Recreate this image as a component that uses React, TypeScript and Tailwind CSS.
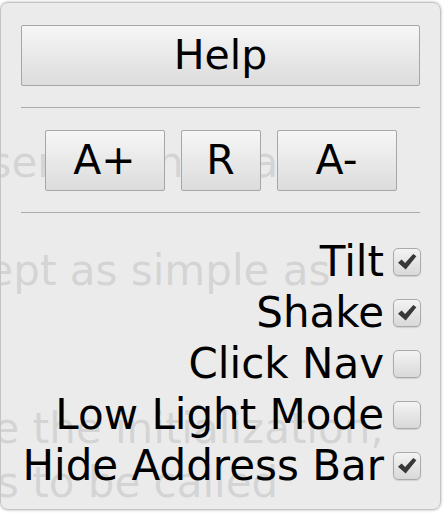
const rows = [
  { label: 'Tilt', checked: true },
  { label: 'Shake', checked: true },
  { label: 'Click Nav', checked: false },
  { label: 'Low Light Mode', checked: false },
  { label: 'Hide Address Bar', checked: true },
];

const btn =
  'h-[61px] rounded-[2px] border border-[#a6a6a6] bg-linear-to-b from-[#f6f6f6] to-[#dcdcdc] text-[41px] leading-none text-black';

function Check({ checked }: { checked: boolean }) {
  return (
    <span className="flex h-[28px] w-[28px] shrink-0 items-center justify-center rounded-[5px] border border-[#aaaaaa] bg-linear-to-b from-[#f3f3f3] to-[#d9d9d9] shadow-[0_1px_1px_rgba(0,0,0,0.12)]">
      {checked && (
        <svg width="20" height="18" viewBox="0 0 20 18">
          <path d="M1 9.8 L4.6 6.6 L8.1 10 L16.3 0.9 L19.4 3.3 L8.7 16.6 Z" fill="#383838" strokeLinejoin="round" />
        </svg>
      )}
    </span>
  );
}

export default function App() {
  return (
    <div className="relative h-[514px] w-[446px] overflow-hidden bg-white font-['DejaVu_Sans',sans-serif]">
      {/* page text behind the menu */}
      <div className="whitespace-nowrap text-[42px] leading-[54px] text-black">
        <p className="ml-[-37px] mt-[136px]">user given to a</p>
        <p className="ml-[-111px] mt-[54px]">concept as simple as</p>
        <p className="ml-[-96px] mt-[104px]">make the initialization,</p>
        <p className="ml-[-3px]">s to be called</p>
      </div>

      <div className="absolute left-0 top-[2px] flex h-[508px] w-[441px] flex-col rounded-[8px] border border-[#c4c4c4] bg-[rgba(233,233,233,0.91)] px-5 pt-[22px] shadow-[0_0_3px_rgba(0,0,0,0.3)]">
        <button className={`${btn} w-full`}>Help</button>
        <hr className="mt-[21px] border-t border-[#aaaaaa]" />
        <div className="mt-[22px] flex justify-center gap-4">
          <button className={`${btn} w-[120px]`}>A+</button>
          <button className={`${btn} w-[80px]`}>R</button>
          <button className={`${btn} w-[120px]`}>A-</button>
        </div>
        <hr className="mt-[21px] border-t border-[#aaaaaa]" />
        <div className="mt-[23px] flex flex-col">
          {rows.map((r) => (
            <label key={r.label} className="flex h-[51px] items-center justify-end gap-[9px] -mr-[1px]">
              <span className="text-[42px] leading-[51px] text-black">{r.label}</span>
              <Check checked={r.checked} />
            </label>
          ))}
        </div>
      </div>
    </div>
  );
}
